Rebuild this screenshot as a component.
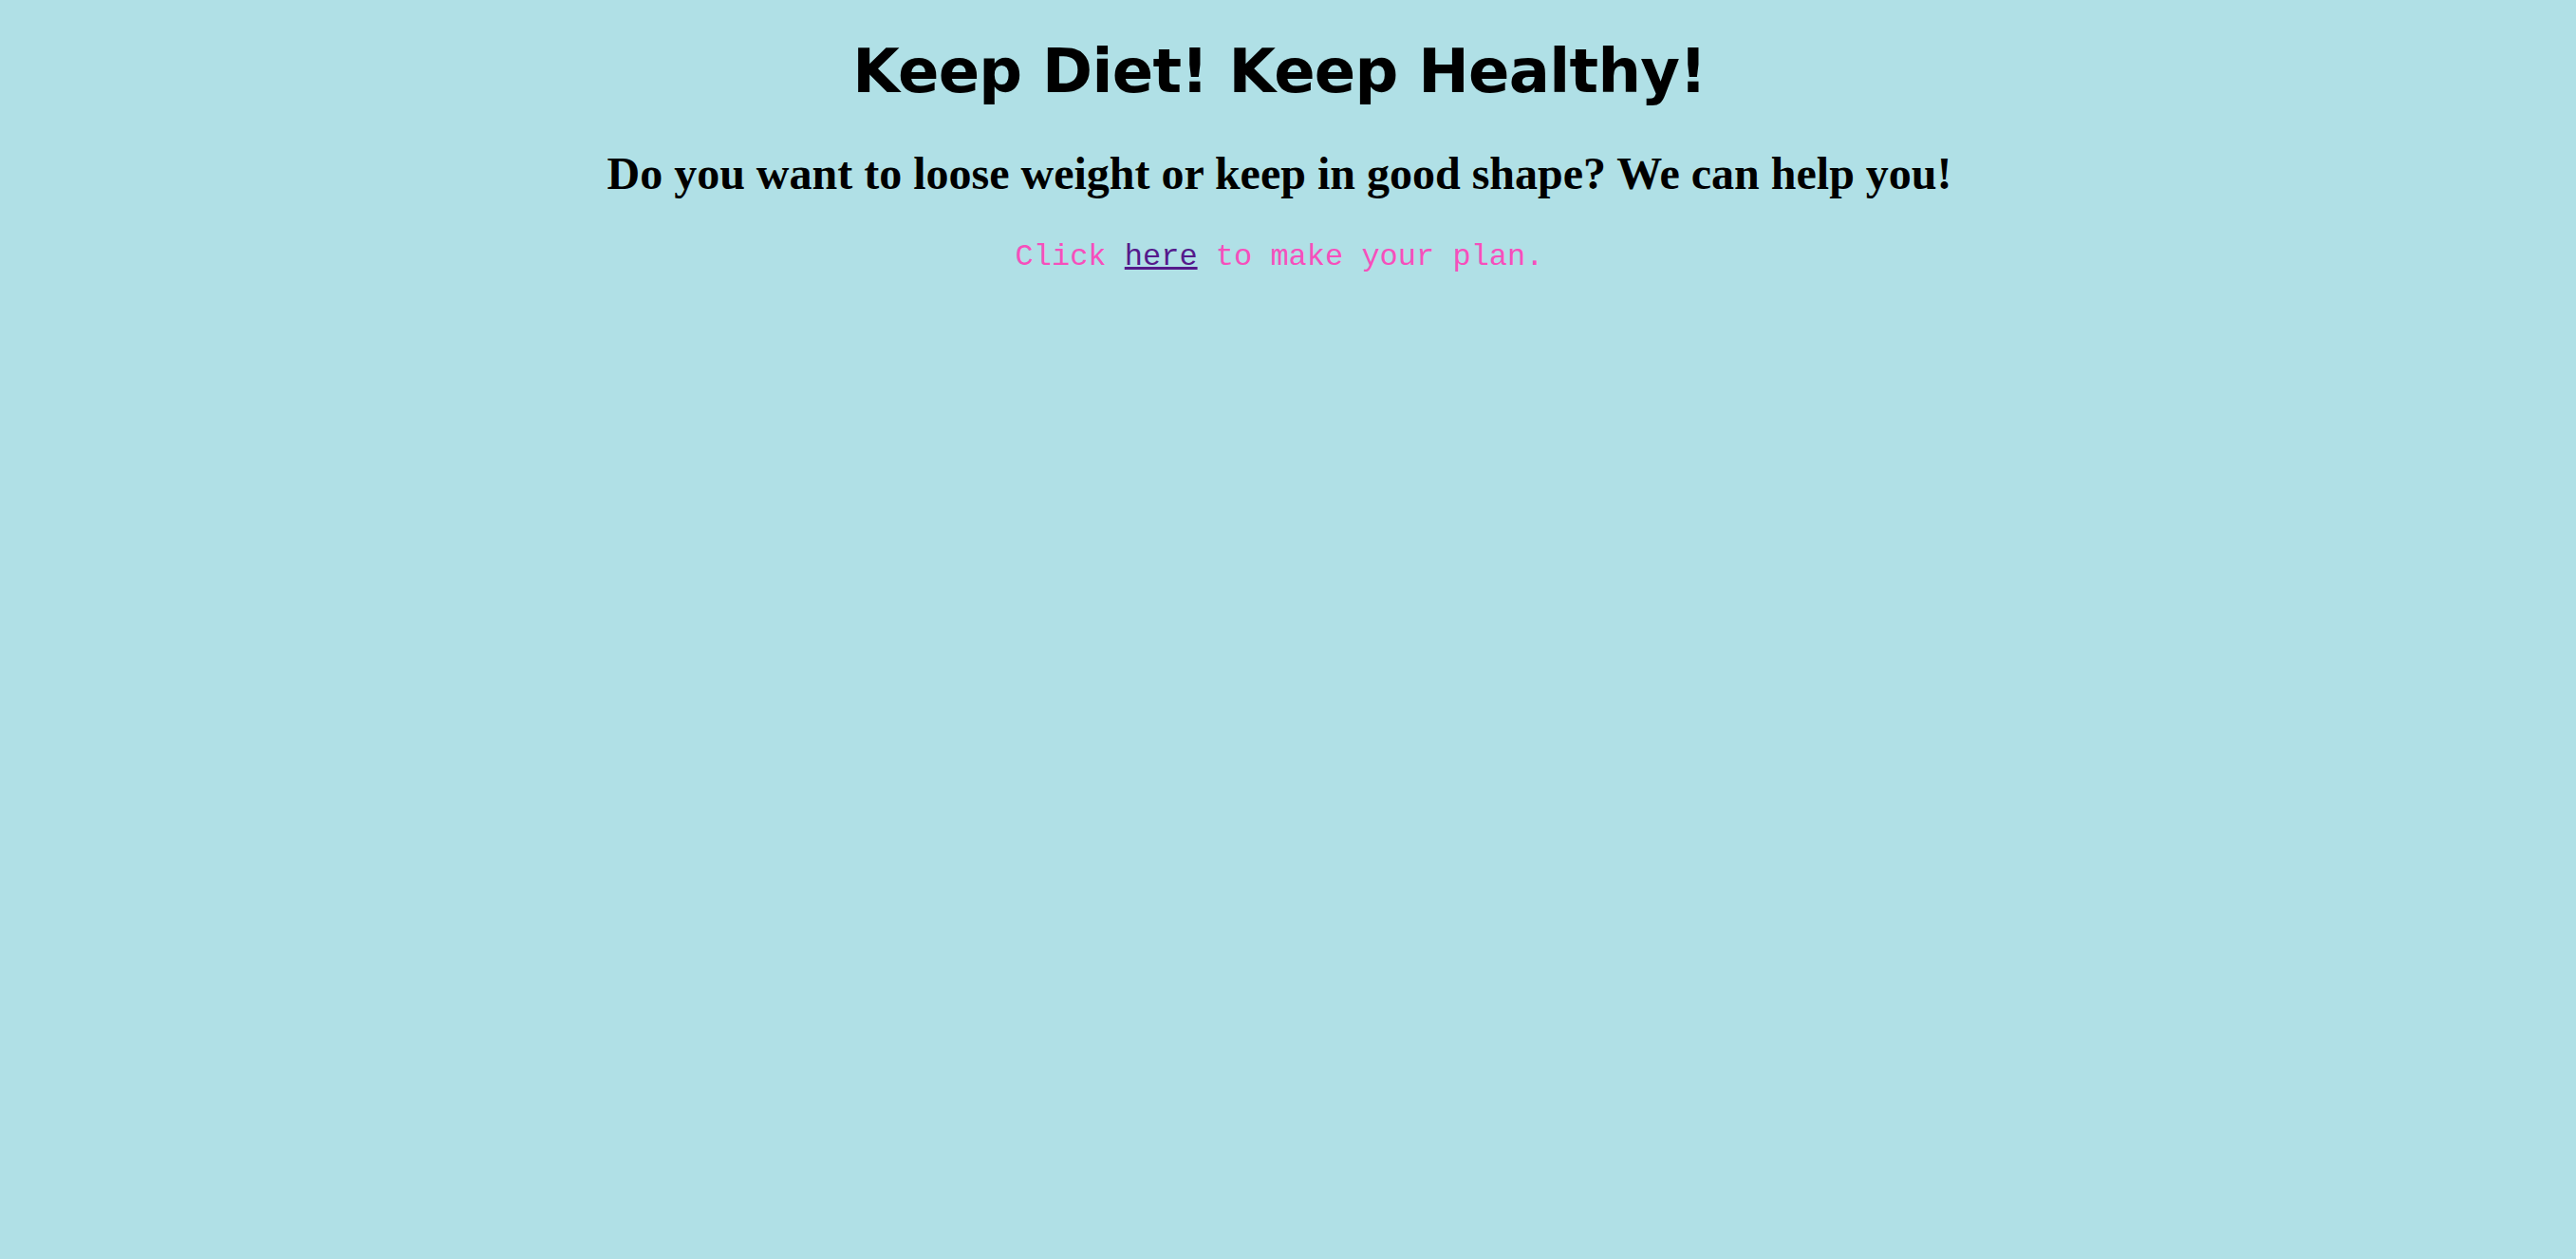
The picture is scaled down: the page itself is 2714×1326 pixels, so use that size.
export default function App() {
  return (
    <div className="min-h-[1326px] w-full bg-[#b0e0e6] pr-[18px] text-center">
      <h1 className="pt-[36px] text-[64px] leading-[78px] font-bold tracking-[-0.7px] text-black [font-family:'DejaVu_Sans',Verdana,sans-serif]">
        Keep Diet! Keep Healthy!
      </h1>
      <h2 className="mt-[41px] text-[48px] leading-[56px] font-bold text-black [font-family:'Liberation_Serif','Times_New_Roman',serif]">
        Do you want to loose weight or keep in good shape? We can help you!
      </h2>
      <p className="mt-[42px] text-[32px] leading-[36px] text-[#f64fbc] [font-family:'Liberation_Mono','Courier_New',monospace]">
        Click{" "}
        <a href="#" className="text-[#551a8b] underline">
          here
        </a>{" "}
        to make your plan.
      </p>
    </div>
  );
}
